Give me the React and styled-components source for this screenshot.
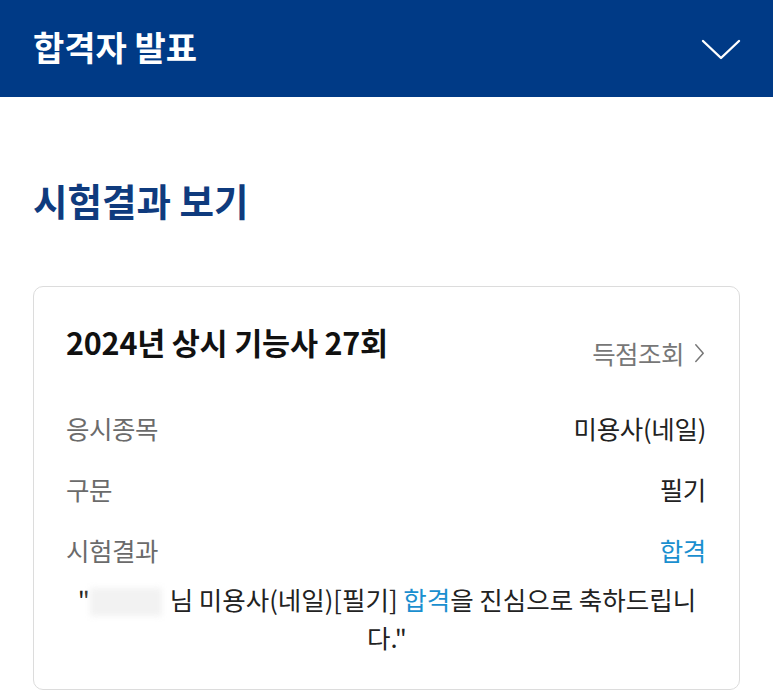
import styled, { createGlobalStyle } from "styled-components";

const GlobalStyle = createGlobalStyle`
  body {
    margin: 0;
    background: #ffffff;
    font-family: "Noto Sans CJK KR", "Noto Sans", sans-serif;
  }
`;

const Header = styled.header`
  height: 97px;
  background: #003a86;
  display: flex;
  align-items: center;
  justify-content: space-between;
  padding: 0 32px 0 33px;
  box-sizing: border-box;
`;

const HeaderTitle = styled.h1`
  margin: 0 0 4px;
  color: #ffffff;
  font-size: 34px;
  font-weight: 700;
`;

const Main = styled.main`
  padding: 0 33px;
`;

const SectionTitle = styled.h2`
  margin: 79px 0 62px;
  color: #0f3b7e;
  font-size: 37.5px;
  line-height: 48px;
  font-weight: 700;
`;

const Card = styled.section`
  border: 1px solid #dcdcdc;
  border-radius: 10px;
  padding: 35px 33px 33px 32px;
`;

const CardHead = styled.div`
  display: flex;
  justify-content: space-between;
  align-items: flex-start;
`;

const CardTitle = styled.h3`
  margin: 0;
  color: #111111;
  font-size: 30.5px;
  line-height: 40px;
  font-weight: 700;
  letter-spacing: -0.2px;
`;

const ScoreLink = styled.a`
  margin-top: 14px;
  display: flex;
  align-items: center;
  gap: 9px;
  color: #777777;
  font-size: 25.5px;
  line-height: 34px;
  letter-spacing: -0.5px;
  text-decoration: none;
`;

const Rows = styled.dl`
  margin: 27px 0 0;
`;

const Row = styled.div`
  height: 61px;
  display: flex;
  align-items: center;
  justify-content: space-between;
`;

const Label = styled.dt`
  color: #6b6b6b;
  font-size: 25.5px;
  letter-spacing: -0.5px;
`;

const Value = styled.dd`
  margin: 0;
  color: ${(p) => (p.$pass ? "#1a8fcf" : "#222222")};
  font-size: 25.5px;
  letter-spacing: -0.3px;
`;

const Message = styled.p`
  margin: 0;
  color: #222222;
  font-size: 25.5px;
  line-height: 38px;
  text-align: center;
  padding: 0 2px 0 4px;
`;

const Pass = styled.span`
  color: #1a8fcf;
`;

const HiddenName = styled.span`
  display: inline-block;
  width: 72px;
  height: 28px;
  margin: 0 2px 0 0;
  vertical-align: -6px;
  background: #f2f2f2;
  filter: blur(3px);
`;

function Chevron({ size = 40, color = "#fff", width = 2.4, dir = "down" }) {
  const d = dir === "down" ? "M2 7 L20 24 L38 7" : "M3 2 L11 11 L3 20";
  const vb = dir === "down" ? "0 0 40 30" : "0 0 14 22";
  return (
    <svg width={size} height={dir === "down" ? size * 0.75 : size * 1.57} viewBox={vb}>
      <path d={d} fill="none" stroke={color} strokeWidth={width} strokeLinecap="round" strokeLinejoin="round" />
    </svg>
  );
}

export default function App() {
  return (
    <>
      <GlobalStyle />
      <Header>
        <HeaderTitle>합격자 발표</HeaderTitle>
        <Chevron />
      </Header>
      <Main>
        <SectionTitle>시험결과 보기</SectionTitle>
        <Card>
          <CardHead>
            <CardTitle>2024년 상시 기능사 27회</CardTitle>
            <ScoreLink href="#">
              득점조회
              <Chevron size={13} color="#777" width={1.6} dir="right" />
            </ScoreLink>
          </CardHead>
          <Rows>
            <Row>
              <Label>응시종목</Label>
              <Value>미용사(네일)</Value>
            </Row>
            <Row>
              <Label>구문</Label>
              <Value>필기</Value>
            </Row>
            <Row>
              <Label>시험결과</Label>
              <Value $pass>합격</Value>
            </Row>
          </Rows>
          <Message>
            "<HiddenName /> 님 미용사(네일)[필기] <Pass>합격</Pass>을 진심으로 축하드립니다."
          </Message>
        </Card>
      </Main>
    </>
  );
}
